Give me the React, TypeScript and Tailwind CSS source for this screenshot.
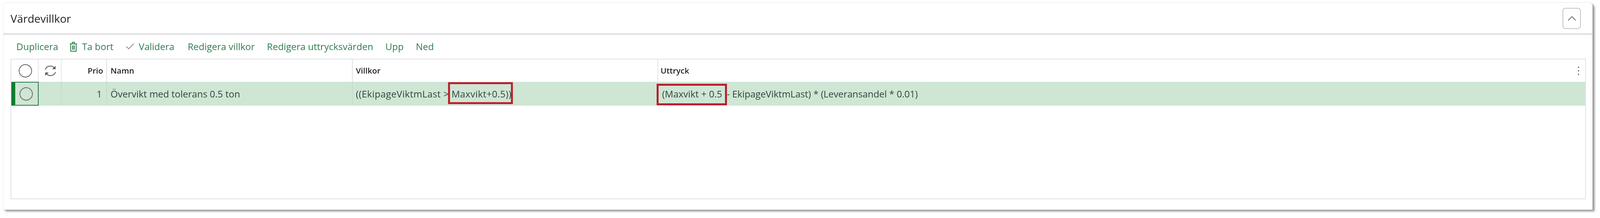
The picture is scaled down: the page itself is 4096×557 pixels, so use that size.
import React from 'react';
import { ChevronUp, Check } from 'lucide-react';

const font = 'font-["Open_Sans","Liberation_Sans",sans-serif]';

const Circle = ({ className = '' }: { className?: string }) => (
  <div className={`w-[34px] h-[34px] rounded-full border-2 ${className}`} />
);

const SyncIcon = () => (
  <svg width="32" height="30" viewBox="0 0 32 30" fill="none" stroke="#555" strokeWidth="2">
    <path d="M3 12 A13 12 0 0 1 27 9" />
    <path d="M29 18 A13 12 0 0 1 5 21" />
    <path d="M29 3 L28.5 10.5 L21 10" fill="#555" strokeWidth="1" />
    <path d="M3 27 L3.5 19.5 L11 20" fill="#555" strokeWidth="1" />
  </svg>
);

const TrashIcon = () => (
  <svg width="20" height="27" viewBox="0 0 20 27" fill="none" stroke="#2f7a4c" strokeWidth="2">
    <path d="M1 6 H19" />
    <path d="M7 5 V2 H13 V5" />
    <path d="M3 6 V25 H17 V6" />
    <path d="M8 10 V21 M12 10 V21" strokeWidth="2.5" />
  </svg>
);

const Action = ({ label, icon, className = '' }: { label: string; icon?: React.ReactNode; className?: string }) => (
  <button className={`flex items-center gap-[12px] text-[#2f7a4c] ${className}`}>
    {icon}
    <span>{label}</span>
  </button>
);

export default function App() {
  return (
    <div className={`w-[4096px] h-[557px] bg-white pl-[8px] pt-[6px] ${font}`}>
      <div className="w-[4069px] h-[530px] flex flex-col bg-white rounded-t-[10px] border border-[#ececec] shadow-[5px_4px_5px_rgba(0,0,0,0.42)] blur-[0.6px]">
        {/* Header */}
        <div className="h-[81px] flex items-center justify-between pl-[18px] pr-[29px] border-b-2 border-[#c8c8c8] shrink-0">
          <h2 className="text-[28px] text-[#222] leading-none">Värdevillkor</h2>
          <button className="w-[47px] h-[54px] flex items-center justify-center rounded-[8px] border-2 border-[#c4c4c4]">
            <ChevronUp className="w-[36px] h-[36px] text-[#777]" strokeWidth={1.5} />
          </button>
        </div>

        {/* Toolbar */}
        <div className="h-[62px] flex items-center pl-[33px] gap-[31px] text-[24px] shrink-0">
          <Action label="Duplicera" className="mr-[-2px]" />
          <Action label="Ta bort" icon={<TrashIcon />} className="mr-[-2px]" />
          <Action label="Validera" icon={<Check className="w-[28px] h-[28px] text-[#666]" strokeWidth={1.25} />} className="!gap-[8px] mr-[3px]" />
          <Action label="Redigera villkor" />
          <Action label="Redigera uttrycksvärden" />
          <Action label="Upp" />
          <Action label="Ned" />
        </div>

        {/* Grid */}
        <div className="ml-[18px] w-[4033px] h-[359px] border-2 border-[#e2e2e2] text-[#222]">
          <div className="h-[57px] grid grid-cols-[70px_59px_116px_629px_782px_1fr] items-stretch text-[20.5px] font-semibold">
            <div className="flex items-center justify-center pl-[3px] border-r-2 border-[#e6e6e6]">
              <Circle className="border-[#666]" />
            </div>
            <div className="flex items-center justify-center pl-[3px] border-r-2 border-[#e6e6e6]">
              <SyncIcon />
            </div>
            <div className="flex items-center justify-end pr-[8px] border-r-2 border-[#e0e0e0]">Prio</div>
            <div className="flex items-center pl-[9px] border-r-2 border-[#e0e0e0]">Namn</div>
            <div className="flex items-center pl-[8px] border-r-2 border-[#e6e6e6]">Villkor</div>
            <div className="flex items-center justify-between pl-[6px] pr-[14px]">
              <span>Uttryck</span>
              <svg width="6" height="24" viewBox="0 0 6 24" fill="#888">
                <circle cx="3" cy="3" r="2" />
                <circle cx="3" cy="12" r="2" />
                <circle cx="3" cy="21" r="2" />
              </svg>
            </div>
          </div>

          <div className="h-[61px] grid grid-cols-[70px_59px_116px_629px_782px_1fr] items-stretch bg-[#cfe6d5] text-[24px] text-[#33423a]">
            <div className="flex items-center border-2 border-[#2b7a45] border-l-0">
              <div className="w-[10px] h-full bg-[#107c2e] shrink-0" />
              <Circle className="ml-[11px] border-[#5f7367]" />
            </div>
            <div className="border-r-2 border-[#c4dccb]" />
            <div className="flex items-center justify-end pr-[11px] border-r-2 border-[#c4dccb]">1</div>
            <div className="flex items-center pl-[9px] border-r-2 border-[#c4dccb]">Övervikt med tolerans 0.5 ton</div>
            <div className="relative flex items-center pl-[8px] tracking-[0.4px]">
              ((EkipageViktmLast &gt; Maxvikt+0.5))
              <div className="absolute left-[244px] top-[1px] w-[166px] h-[56px] border-[5px] border-[#c0202c]" />
            </div>
            <div className="relative flex items-center pl-[10px]">
              <span>(Maxvikt + 0.5</span>
              <span className="ml-[12px] tracking-[-0.1px]">- EkipageViktmLast) * (Leveransandel * 0.01)</span>
              <div className="absolute left-[-4px] top-[5px] w-[180px] h-[55px] border-[5px] border-[#b81f2b]" />
            </div>
          </div>
        </div>
      </div>
    </div>
  );
}
